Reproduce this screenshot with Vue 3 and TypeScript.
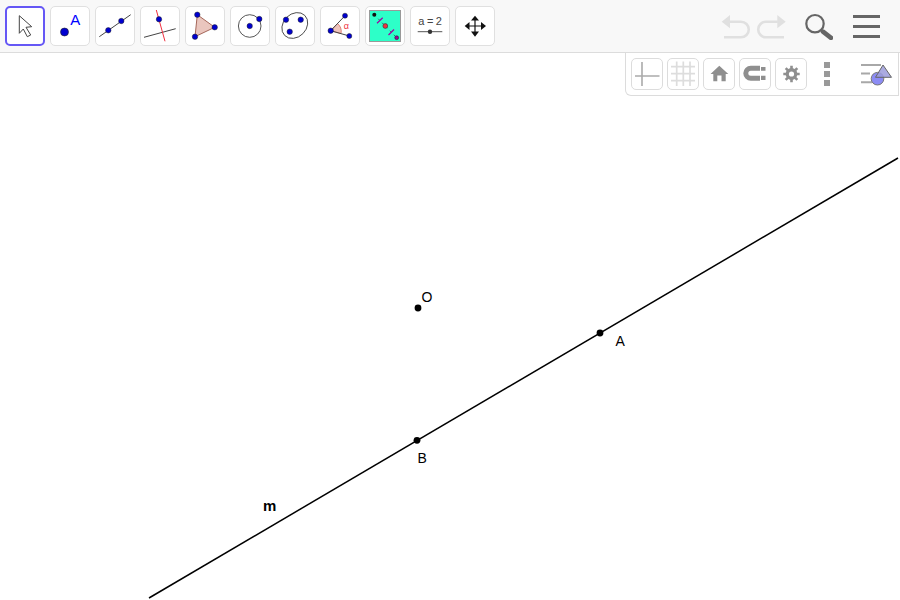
<script setup lang="ts">
const hamburgerBars: number[] = [1, 2, 3]
</script>

<template>
  <div class="app">
    <header class="toolbar">
      <div class="tools">
        <button class="tool active">
          <svg viewBox="5 6 40 40"><path d="M19.3 15.7 31.7 26.7 26 27.3 30.7 35 27.3 36.7 23.3 29 19.3 33.3Z" fill="#fff" stroke="#444" stroke-width="1"/></svg>
        </button>
        <button class="tool">
          <svg viewBox="50 6 40 40">
            <circle cx="64.5" cy="32" r="4" fill="#0000d0" stroke="#222" stroke-width=".6"/>
            <text x="70.3" y="25" class="icon-a">A</text>
          </svg>
        </button>
        <button class="tool">
          <svg viewBox="95 6 40 40">
            <line x1="99.3" y1="36.7" x2="130.7" y2="14.7" stroke="#444"/>
            <circle cx="108.3" cy="30.3" r="2.7" class="pt"/>
            <circle cx="121.3" cy="21" r="2.7" class="pt"/>
          </svg>
        </button>
        <button class="tool">
          <svg viewBox="140 6 40 40">
            <line x1="144" y1="37.3" x2="175.7" y2="28.7" stroke="#444"/>
            <line x1="156.3" y1="10" x2="165" y2="41.3" stroke="#f03040"/>
            <circle cx="159" cy="19.3" r="2.7" class="pt"/>
          </svg>
        </button>
        <button class="tool">
          <svg viewBox="185 6 40 40">
            <path d="M197.3 14.7 214.7 27.3 195 36.7Z" fill="#eac6be" stroke="#a5675a" stroke-width="1"/>
            <circle cx="197.3" cy="14.7" r="2.7" class="pt"/>
            <circle cx="214.7" cy="27.3" r="2.7" class="pt"/>
            <circle cx="195" cy="36.7" r="2.7" class="pt"/>
          </svg>
        </button>
        <button class="tool">
          <svg viewBox="230 6 40 40">
            <circle cx="249.7" cy="26" r="11.3" fill="none" stroke="#444" stroke-width=".9"/>
            <circle cx="249.7" cy="26" r="2.7" class="pt"/>
            <circle cx="259.3" cy="19" r="2.7" class="pt"/>
          </svg>
        </button>
        <button class="tool">
          <svg viewBox="275 6 40 40">
            <ellipse cx="294.8" cy="25.5" rx="14.2" ry="11.5" transform="rotate(-45 294.8 25.5)" fill="none" stroke="#444" stroke-width=".9"/>
            <circle cx="286" cy="19.7" r="2.7" class="pt"/>
            <circle cx="300.7" cy="19.7" r="2.7" class="pt"/>
            <circle cx="289.7" cy="31.7" r="2.7" class="pt"/>
          </svg>
        </button>
        <button class="tool">
          <svg viewBox="320 6 40 40">
            <path d="M330.7 30.7 337.5 23.5A10.5 10.5 0 0 1 341 33.6Z" fill="#efc4bc" stroke="#d86a5c" stroke-width=".8"/>
            <path d="M345 15.7 330.7 30.7 349.3 36" fill="none" stroke="#444"/>
            <circle cx="345" cy="15.7" r="2.5" class="pt"/>
            <circle cx="330.7" cy="30.7" r="2.7" class="pt"/>
            <circle cx="349.3" cy="36" r="2.5" class="pt"/>
            <text x="343.7" y="28.8" class="icon-alpha">α</text>
          </svg>
        </button>
        <button class="tool">
          <svg viewBox="365 6 40 40">
            <rect x="369.5" y="10.5" width="31" height="31" fill="#2dffc8" stroke="#999"/>
            <line x1="374.3" y1="14.7" x2="396.7" y2="37.7" stroke="#222" stroke-width=".6" stroke-dasharray="2 3.6"/>
            <line x1="377" y1="23.3" x2="382.7" y2="17.7" stroke="#a000a0" stroke-width="1.2"/>
            <line x1="388.5" y1="35" x2="394" y2="29.5" stroke="#a000a0" stroke-width="1.2"/>
            <circle cx="374.3" cy="14.7" r="2" fill="#111"/>
            <circle cx="385.3" cy="26" r="2.4" fill="#f03040" stroke="#333" stroke-width=".6"/>
            <circle cx="396.7" cy="37.7" r="1.9" fill="#a000a0" stroke="#222" stroke-width=".6"/>
          </svg>
        </button>
        <button class="tool">
          <svg viewBox="410 6 40 40">
            <text x="430" y="25" text-anchor="middle" class="icon-slider">a = 2</text>
            <line x1="417.7" y1="31.7" x2="442.3" y2="31.7" stroke="#555"/>
            <circle cx="430" cy="31.7" r="2.2" fill="#333"/>
          </svg>
        </button>
        <button class="tool">
          <svg viewBox="455 6 40 40">
            <path d="M475 18V34M467 26H483" stroke="#111" stroke-width="1.2" fill="none"/>
            <path d="M475 15.7 479 20.5H471ZM475 36.7 479 31.5H471ZM464.7 26 469.5 22V30ZM486 26 481 22V30Z" fill="#111"/>
          </svg>
        </button>
      </div>

      <div class="actions">
        <svg class="undo" viewBox="720 12 70 28" width="70" height="28">
          <g fill="none" stroke="#e0e0e0" stroke-width="2.6">
            <path d="M729 21.7H741A7.8 7.8 0 0 1 741 37.3H724"/>
            <path d="M777.8 21.7H766A7.8 7.8 0 0 0 766 37.3H784"/>
          </g>
          <path d="M721.7 21.7 730 15V28.3ZM785.7 21.7 777.3 15V28.3Z" fill="#e0e0e0"/>
        </svg>
        <svg class="action-search" viewBox="804 12 28 28" width="28" height="28">
          <circle cx="814" cy="23.7" r="8.7" fill="none" stroke="#666" stroke-width="2.2"/>
          <line x1="822" y1="31.7" x2="830" y2="37.8" stroke="#666" stroke-width="4.6" stroke-linecap="round"/>
        </svg>
        <div class="menu">
          <span v-for="b in hamburgerBars" :key="b" class="bar"></span>
        </div>
      </div>
    </header>

    <main class="canvas">
      <svg class="plot" viewBox="0 53 900 547" width="900" height="547">
        <line x1="149" y1="598" x2="898" y2="158" stroke="#000" stroke-width="1.5"/>
        <circle cx="418" cy="308" r="3.4" fill="#000"/>
        <circle cx="600" cy="333" r="3.4" fill="#000"/>
        <circle cx="417" cy="440.3" r="3.4" fill="#000"/>
        <text x="421.5" y="302" class="label">O</text>
        <text x="615.5" y="346" class="label">A</text>
        <text x="417.5" y="463" class="label">B</text>
        <text x="263" y="511" class="label bold">m</text>
      </svg>

      <aside class="stylebar">
        <button class="mini">
          <svg viewBox="632 59 30 30"><path d="M635 76H659.5M642 62V86" stroke="#aaa" stroke-width="1.6" fill="none"/></svg>
        </button>
        <button class="mini">
          <svg viewBox="668 59 30 30"><path d="M671 66.7H695M671 73.7H695M671 80.7H695M676.7 61.5V86M683.3 61.5V86M690 61.5V86" stroke="#ddd" stroke-width="1.7" fill="none"/></svg>
        </button>
        <button class="mini">
          <svg viewBox="704 59 30 30"><path d="M719.3 65.7 728.3 74H725.7V81.3H721.5V75.5H717.3V81.3H713.3V74H710.5Z" fill="#8f8f8f"/></svg>
        </button>
        <button class="mini">
          <svg viewBox="740 59 30 30">
            <path d="M760 68.2H750.8A5 5 0 0 0 750.8 78.2H760" fill="none" stroke="#8f8f8f" stroke-width="5"/>
            <path d="M761 67H765.5V70.8H761ZM761 75.7H765.5V80H761Z" fill="#8f8f8f"/>
          </svg>
        </button>
        <button class="mini">
          <svg viewBox="776 59 30 30">
            <circle cx="791.5" cy="74" r="4.4" fill="none" stroke="#8f8f8f" stroke-width="3"/>
            <path d="M791.5 65.8V82.2M783.3 74H799.7M785.7 68.2 797.3 79.8M797.3 68.2 785.7 79.8" stroke="#8f8f8f" stroke-width="2.6" fill="none"/>
            <circle cx="791.5" cy="74" r="2.6" fill="#fff"/>
          </svg>
        </button>
        <div class="dots">
          <span class="dot"></span><span class="dot"></span><span class="dot"></span>
        </div>
        <svg class="toggle" viewBox="860 62 33 28" width="33" height="28">
          <path d="M861 65H881M861 73.5H870M861 82.3H872" stroke="#a8a8a8" stroke-width="2" fill="none"/>
          <circle cx="877.5" cy="78.7" r="6.3" fill="#8c8cf4" stroke="#777" stroke-width="1"/>
          <path d="M883 65 891.5 77.3H875.5Z" fill="#9c9cdc" fill-opacity=".85" stroke="#666" stroke-width="1"/>
        </svg>
      </aside>
    </main>
  </div>
</template>

<style scoped>
.app {
  position: relative;
  width: 900px;
  height: 600px;
  overflow: hidden;
  display: flex;
  flex-direction: column;
  background: #fff;
  font-family: "Liberation Sans", Arial, sans-serif;
}
.toolbar {
  display: flex;
  justify-content: space-between;
  box-sizing: border-box;
  height: 53px;
  padding: 6px 20px 0 5px;
  background: #f8f8f8;
  border-bottom: 1px solid #dcdcdc;
}
.tools {
  display: flex;
  gap: 5px;
}
.tool {
  box-sizing: border-box;
  width: 40px;
  height: 40px;
  padding: 0;
  background: #fff;
  border: 1px solid #e0e0e0;
  border-radius: 5px;
}
.tool svg {
  display: block;
  width: 40px;
  height: 40px;
  margin: -1px;
}
.tool.active {
  border: 2px solid #6557f5;
}
.tool.active svg {
  margin: -2px;
}
.pt {
  fill: #0000d0;
  stroke: #222;
  stroke-width: 0.5;
}
.icon-a {
  font-size: 15px;
  fill: #0000ff;
}
.icon-alpha {
  font-size: 9px;
  fill: #f03040;
}
.icon-slider {
  font-size: 11px;
  letter-spacing: -0.3px;
  fill: #444;
}
.actions {
  display: flex;
  align-items: flex-start;
  padding-top: 6px;
}
.undo {
  margin-right: 15px;
}
.action-search {
  margin-right: 20px;
}
.menu {
  display: flex;
  flex-direction: column;
  gap: 7px;
  width: 27px;
  padding-top: 3px;
}
.bar {
  height: 3px;
  background: #666;
}
.canvas {
  position: relative;
  flex: 1;
}
.plot {
  display: block;
}
.label {
  font-size: 14px;
  fill: #000;
}
.label.bold {
  font-size: 15px;
  font-weight: bold;
}
.stylebar {
  position: absolute;
  top: 0;
  right: 1px;
  box-sizing: border-box;
  display: flex;
  align-items: flex-start;
  gap: 4px;
  width: 274px;
  height: 43px;
  padding: 5px 0 0 5px;
  background: #fff;
  border-left: 1px solid #dcdcdc;
  border-right: 1px solid #dcdcdc;
  border-bottom: 1px solid #dcdcdc;
  border-bottom-left-radius: 6px;
}
.mini {
  box-sizing: border-box;
  width: 32px;
  height: 32px;
  padding: 0;
  background: #fff;
  border: 1px solid #dcdcdc;
  border-radius: 5px;
}
.mini svg {
  display: block;
  width: 30px;
  height: 30px;
}
.dots {
  display: flex;
  flex-direction: column;
  gap: 3px;
  margin: 4px 0 0 13px;
}
.dot {
  display: block;
  width: 6px;
  height: 6px;
  background: #999;
}
.toggle {
  margin: 4px 0 0 26px;
}
</style>
